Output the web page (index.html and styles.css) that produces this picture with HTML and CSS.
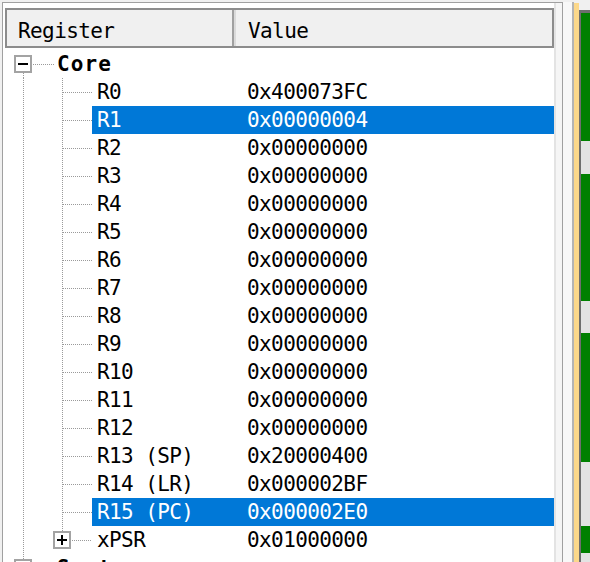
FILE: index.html
```html
<!DOCTYPE html>
<html>
<head>
<meta charset="utf-8">
<title>Registers</title>
<link rel="stylesheet" href="styles.css">
</head>
<body>
<div class="screen">
  <div class="panel">
    <div class="list">
      <div class="content">
        <div class="header">
          <div class="hcell hcell-name">Register</div>
          <div class="hcell hcell-value">Value</div>
        </div>
        <div class="rows">
          <div class="row">
            <div class="tree tree-group tree-group-first"><span class="box minus"></span></div>
            <div class="label">Core</div>
          </div>
          <div class="row">
            <div class="tree tree-child"></div>
            <div class="cells"><span class="name">R0</span><span class="value">0x400073FC</span></div>
          </div>
          <div class="row">
            <div class="tree tree-child"></div>
            <div class="cells selected"><span class="name">R1</span><span class="value">0x00000004</span></div>
          </div>
          <div class="row">
            <div class="tree tree-child"></div>
            <div class="cells"><span class="name">R2</span><span class="value">0x00000000</span></div>
          </div>
          <div class="row">
            <div class="tree tree-child"></div>
            <div class="cells"><span class="name">R3</span><span class="value">0x00000000</span></div>
          </div>
          <div class="row">
            <div class="tree tree-child"></div>
            <div class="cells"><span class="name">R4</span><span class="value">0x00000000</span></div>
          </div>
          <div class="row">
            <div class="tree tree-child"></div>
            <div class="cells"><span class="name">R5</span><span class="value">0x00000000</span></div>
          </div>
          <div class="row">
            <div class="tree tree-child"></div>
            <div class="cells"><span class="name">R6</span><span class="value">0x00000000</span></div>
          </div>
          <div class="row">
            <div class="tree tree-child"></div>
            <div class="cells"><span class="name">R7</span><span class="value">0x00000000</span></div>
          </div>
          <div class="row">
            <div class="tree tree-child"></div>
            <div class="cells"><span class="name">R8</span><span class="value">0x00000000</span></div>
          </div>
          <div class="row">
            <div class="tree tree-child"></div>
            <div class="cells"><span class="name">R9</span><span class="value">0x00000000</span></div>
          </div>
          <div class="row">
            <div class="tree tree-child"></div>
            <div class="cells"><span class="name">R10</span><span class="value">0x00000000</span></div>
          </div>
          <div class="row">
            <div class="tree tree-child"></div>
            <div class="cells"><span class="name">R11</span><span class="value">0x00000000</span></div>
          </div>
          <div class="row">
            <div class="tree tree-child"></div>
            <div class="cells"><span class="name">R12</span><span class="value">0x00000000</span></div>
          </div>
          <div class="row">
            <div class="tree tree-child"></div>
            <div class="cells"><span class="name">R13 (SP)</span><span class="value">0x20000400</span></div>
          </div>
          <div class="row">
            <div class="tree tree-child"></div>
            <div class="cells"><span class="name">R14 (LR)</span><span class="value">0x000002BF</span></div>
          </div>
          <div class="row">
            <div class="tree tree-child"></div>
            <div class="cells selected"><span class="name">R15 (PC)</span><span class="value">0x000002E0</span></div>
          </div>
          <div class="row">
            <div class="tree tree-child tree-sub"><span class="box plus"></span></div>
            <div class="cells"><span class="name">xPSR</span><span class="value">0x01000000</span></div>
          </div>
          <div class="row">
            <div class="tree tree-group tree-group-last"><span class="box plus"></span></div>
            <div class="label">System</div>
          </div>
        </div>
      </div>
      <div class="edge"></div>
    </div>
  </div>
  <div class="side">
    <div class="side-pad"></div>
    <div class="side-line"></div>
    <div class="side-yellow"></div>
    <div class="side-dark"></div>
    <div class="side-bars">
      <div class="bar green b1"></div>
      <div class="bar gray b2"></div>
      <div class="bar green b3"></div>
      <div class="bar gray b4"></div>
      <div class="bar green b5"></div>
      <div class="bar gray b6"></div>
      <div class="bar green b7"></div>
      <div class="bar gray b8"></div>
    </div>
  </div>
</div>
</body>
</html>
```

FILE: styles.css
```css
* { box-sizing: border-box; }

html, body {
  margin: 0;
  padding: 0;
  background: #f0f0f0;
}

body {
  font-family: "DejaVu Sans Mono", "Liberation Mono", monospace;
  font-size: 21px;
  letter-spacing: -0.6px;
  color: #000;
}

.screen {
  display: flex;
  width: 590px;
  height: 562px;
  overflow: hidden;
}

/* ---------- left register list ---------- */
.panel {
  width: 563px;
  flex: none;
  padding: 2px 0 0 2px;
}

.list {
  display: flex;
  height: 600px;
  border: 1px solid #a0a0a0;
  border-bottom: none;
}

.content {
  width: 551px;
  flex: none;
  background: #fff;
}

.edge {
  flex: 1;
  background: linear-gradient(to right, #e3e3e3 0 2px, #f5f5f5 2px);
}

.header {
  display: flex;
  width: 549px;
  height: 40px;
  margin: 5px 0 2px 2px;
  border: 2px solid #8c8c8c;
  background: #f0f0f0;
}

.hcell {
  height: 36px;
  line-height: 30px;
  padding-top: 6px;
  white-space: nowrap;
}

.hcell-name {
  width: 227px;
  padding-left: 11px;
  border-right: 2px solid #a0a0a0;
}

.hcell-value {
  flex: 1;
  padding-left: 12px;
  border-left: 2px solid #dadada;
}

.rows {
  display: flex;
  flex-direction: column;
}

.row {
  display: flex;
  height: 28px;
  line-height: 28px;
  white-space: nowrap;
}

/* ---------- tree connectors ---------- */
.tree {
  display: flex;
  align-items: center;
  flex: none;
  height: 28px;
}

.tree-child {
  width: 89px;
  background:
    repeating-linear-gradient(to bottom, #9a9a9a 0 1px, transparent 1px 2px) 20px 0 / 1px 28px no-repeat,
    repeating-linear-gradient(to bottom, #9a9a9a 0 1px, transparent 1px 2px) 59px 0 / 1px 28px no-repeat,
    repeating-linear-gradient(to right, #9a9a9a 0 1px, transparent 1px 2px) 60px 14px / 29px 1px no-repeat;
}

.tree-sub {
  background:
    repeating-linear-gradient(to bottom, #9a9a9a 0 1px, transparent 1px 2px) 20px 0 / 1px 28px no-repeat,
    repeating-linear-gradient(to bottom, #9a9a9a 0 1px, transparent 1px 2px) 59px 0 / 1px 5px no-repeat,
    repeating-linear-gradient(to right, #9a9a9a 0 1px, transparent 1px 2px) 69px 14px / 20px 1px no-repeat;
}

.tree-sub .box {
  margin-left: 50px;
}

.tree-group {
  width: 52px;
}

.tree-group .box {
  margin-left: 11px;
}

.tree-group-first {
  background:
    repeating-linear-gradient(to bottom, #9a9a9a 0 1px, transparent 1px 2px) 20px 23px / 1px 5px no-repeat,
    repeating-linear-gradient(to right, #9a9a9a 0 1px, transparent 1px 2px) 30px 14px / 22px 1px no-repeat;
}

.tree-group-last {
  background:
    repeating-linear-gradient(to bottom, #9a9a9a 0 1px, transparent 1px 2px) 20px 0 / 1px 5px no-repeat,
    repeating-linear-gradient(to right, #9a9a9a 0 1px, transparent 1px 2px) 30px 14px / 22px 1px no-repeat;
}

.box {
  width: 18px;
  height: 18px;
  flex: none;
  border: 2px solid #a3a3a3;
}

.box.minus {
  background:
    linear-gradient(#000, #000) center / 10px 2px no-repeat,
    #fff;
}

.box.plus {
  background:
    linear-gradient(#000, #000) center / 10px 2px no-repeat,
    linear-gradient(#000, #000) center / 2px 10px no-repeat,
    #fff;
}

.label {
  padding-left: 2px;
  font-weight: bold;
  letter-spacing: 1.1px;
}

.cells {
  display: flex;
  width: 462px;
  padding-left: 5px;
}

.cells.selected {
  background: #0078d7;
  color: #fff;
}

.name {
  width: 150px;
  flex: none;
}

/* ---------- right edge strip ---------- */
.side {
  display: flex;
  flex: 1;
  height: 562px;
}

.side-pad {
  width: 9px;
  margin-top: 2px;
  background: #f8f8f8;
}

.side-line {
  width: 2px;
  margin-top: 2px;
  background: #b4b4b4;
}

.side-yellow {
  width: 5px;
  margin-top: 3px;
  background: #fcd88a;
}

.side-dark {
  width: 2px;
  margin-top: 10px;
  background: #6e6e6e;
}

.side-bars {
  flex: 1;
  display: flex;
  flex-direction: column;
  margin-top: 10px;
  border-top: 3px solid #6e6e6e;
}

.bar { flex: none; }
.green { background: #008000; }
.gray { background: #e3e3e3; }
.b1 { height: 128px; }
.b2 { height: 33px; }
.b3 { height: 127px; }
.b4 { height: 32px; }
.b5 { height: 129px; }
.b6 { height: 64px; }
.b7 { height: 27px; }
.b8 { flex: 1; }
```
